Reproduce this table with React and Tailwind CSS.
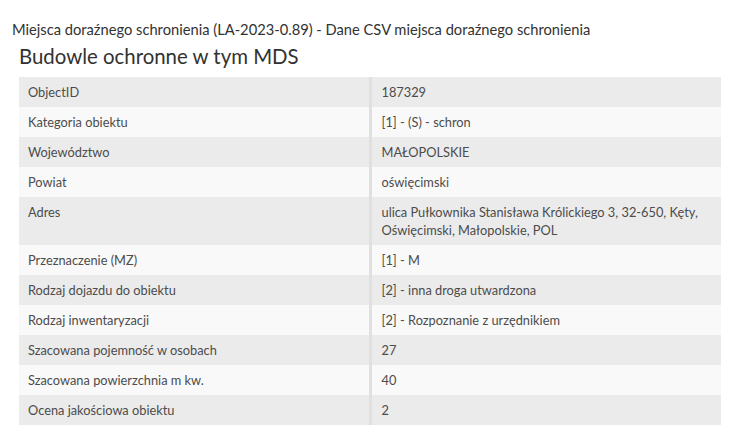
const rows = [
  ['ObjectID', '187329'],
  ['Kategoria obiektu', '[1] - (S) - schron'],
  ['Województwo', 'MAŁOPOLSKIE'],
  ['Powiat', 'oświęcimski'],
  ['Adres', 'ulica Pułkownika Stanisława Królickiego 3, 32-650, Kęty, Oświęcimski, Małopolskie, POL'],
  ['Przeznaczenie (MZ)', '[1] - M'],
  ['Rodzaj dojazdu do obiektu', '[2] - inna droga utwardzona'],
  ['Rodzaj inwentaryzacji', '[2] - Rozpoznanie z urzędnikiem'],
  ['Szacowana pojemność w osobach', '27'],
  ['Szacowana powierzchnia m kw.', '40'],
  ['Ocena jakościowa obiektu', '2'],
];

export default function App() {
  return (
    <div className="w-[731px] h-[434px] bg-white overflow-hidden font-['Lato',sans-serif] text-[#4c4c4c]">
      <div className="pt-[19px] pl-[12px] text-[14.7px] leading-[20px] text-[#323232]">
        Miejsca doraźnego schronienia (LA-2023-0.89) - Dane CSV miejsca doraźnego schronienia
      </div>
      <div className="pl-[19px] pr-[10px]">
        <h2 className="text-[20.4px] leading-[28px] text-[#323232] mt-[3px] mb-[7px]">Budowle ochronne w tym MDS</h2>
        <table className="w-full table-fixed border-collapse text-[12.8px]">
          <tbody>
            {rows.map(([label, value], i) => (
              <tr key={label} className={i % 2 === 0 ? 'bg-[#ebebeb]' : 'bg-[#f9f9f9]'}>
                <td className="w-1/2 align-top pt-[6px] pb-[6px] pl-[9px] pr-[8px] leading-[18px]">{label}</td>
                <td className="w-1/2 align-top pt-[6px] pb-[6px] pl-[10px] pr-[8px] leading-[18px] border-l-[3px] border-l-[#e0e0e0]">{value}</td>
              </tr>
            ))}
          </tbody>
        </table>
      </div>
    </div>
  );
}
